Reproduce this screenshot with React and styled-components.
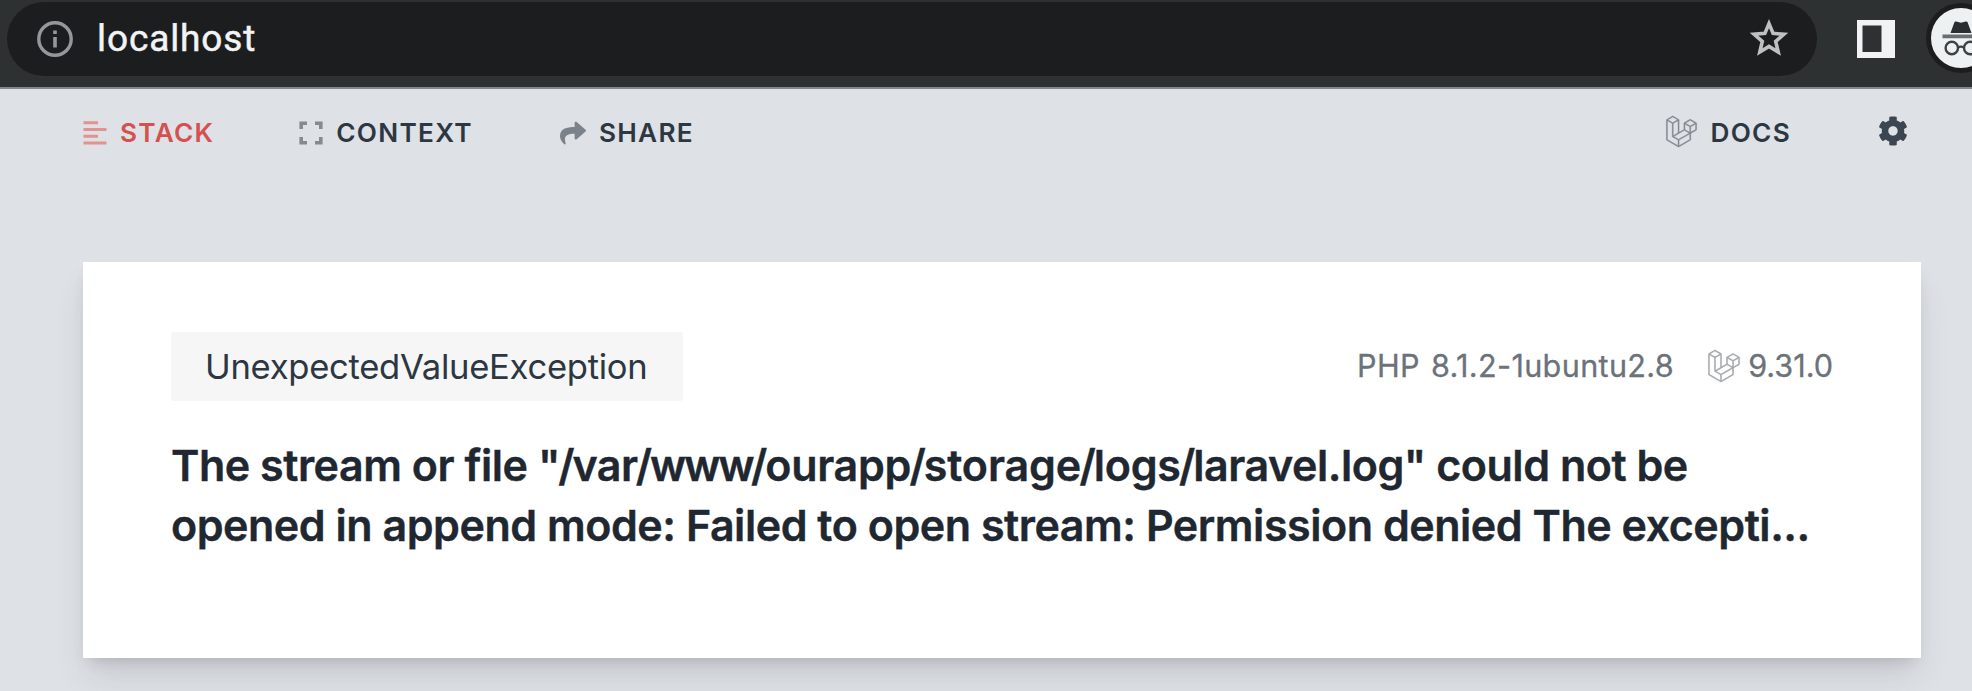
import React from "react";
import styled, { createGlobalStyle } from "styled-components";
import { FaShare, FaCog } from "react-icons/fa";
import { SiLaravel } from "react-icons/si";

const GlobalStyle = createGlobalStyle`
  * { box-sizing: border-box; }
  body { margin: 0; background: #dee1e6; }
`;

const Page = styled.div`
  width: 1972px;
  height: 691px;
  overflow: hidden;
  background: #dee1e6;
  font-family: Inter, "Liberation Sans", sans-serif;
  color: #2d3742;
`;

const BrowserBar = styled.header`
  display: flex;
  align-items: flex-start;
  height: 89px;
  padding: 2px 0 0 7px;
  overflow: hidden;
  background: #2d3132;
  border-bottom: 2px solid #85888b;
`;

const AddressBar = styled.div`
  flex: none;
  display: flex;
  align-items: center;
  width: 1810px;
  height: 74px;
  padding: 0 28px 0 30px;
  border-radius: 37px;
  background: #1c1d1f;
`;

const Url = styled.span`
  margin-left: 24px;
  flex: 1;
  font-family: Roboto, sans-serif;
  font-size: 37px;
  line-height: 44px;
  letter-spacing: 0.9px;
  -webkit-text-stroke: 0.5px #f2f3f4;
  color: #f2f3f4;
`;

const SidePanelIcon = styled.svg`
  flex: none;
  margin: 18px 0 0 40px;
`;

const Profile = styled.div`
  flex: none;
  display: flex;
  align-items: center;
  justify-content: center;
  width: 70px;
  height: 70px;
  margin: 1px 0 0 31px;
  border: 5px solid #1c1d1f;
  border-radius: 50%;
  background: #eef1f2;
`;

const Nav = styled.nav`
  display: flex;
  align-items: center;
  height: 88px;
  padding: 0 64px 0 83px;
`;

const NavItem = styled.a`
  display: flex;
  align-items: center;
  margin-right: ${(p) => p.$gap || 0}px;
  font-size: 26.2px;
  font-weight: 600;
  line-height: 32px;
  letter-spacing: 1.3px;
  color: ${(p) => (p.$active ? "#d4514f" : "#2d3742")};
  svg { flex: none; margin-right: ${(p) => p.$iconGap}px; }
`;

const Spacer = styled.div`
  flex: 1;
`;

const GearIcon = styled(FaCog)`
  flex: none;
  margin-bottom: 4px;
`;

const LaravelIcon = styled(SiLaravel)`
  flex: none;
  stroke: currentColor;
  stroke-width: 0.35px;
  overflow: visible;
`;

const DocsIcon = styled(LaravelIcon)`
  margin-bottom: 4px;
`;

const Card = styled.main`
  width: 1838px;
  height: 396px;
  margin: 85px 0 0 83px;
  padding: 70px 88px 0;
  background: #fff;
  box-shadow: 0 22px 33px -6px rgba(60, 64, 70, 0.14), 0 8px 14px -6px rgba(60, 64, 70, 0.2);
`;

const CardHeader = styled.div`
  display: flex;
  align-items: center;
  justify-content: space-between;
  height: 69px;
`;

const ExceptionBadge = styled.div`
  display: flex;
  align-items: center;
  width: 512px;
  height: 69px;
  padding: 0 0 1px 34px;
  border-radius: 3px;
  background: #f6f6f6;
  font-size: 34.6px;
  letter-spacing: -0.28px;
  color: #2d3742;
`;

const Versions = styled.div`
  display: flex;
  align-items: center;
  padding-bottom: 1px;
  font-size: 30.6px;
  line-height: 40px;
  letter-spacing: 0.35px;
  word-spacing: 2px;
  color: #6b727a;
  -webkit-text-stroke: 0.3px #6b727a;
  svg { margin: 0 8px 0 34px; }
`;

const FrameworkVersion = styled.span`
  letter-spacing: 0;
`;

const Message = styled.h1`
  margin: 34px 0 0;
  font-size: 43px;
  font-weight: 600;
  line-height: 60.2px;
  letter-spacing: -0.47px;
  white-space: nowrap;
  color: #1f2730;
  -webkit-text-stroke: 0.4px #1f2730;
`;

const Line = styled.span`
  display: block;
`;

const Slash = styled.span`
  margin: 0 -1.6px;
`;

const Segment = styled.span`
  letter-spacing: ${(p) => p.$spacing}px;
`;

const InfoIcon = () => (
  <svg width="36" height="36" viewBox="0 0 36 36">
    <circle cx="18" cy="18" r="16.2" fill="none" stroke="#94989c" strokeWidth="3.4" />
    <path d="M16.2 9.5h3.6v3.4h-3.6zM16.2 16h3.6v10.5h-3.6z" fill="#94989c" />
  </svg>
);

const StarIcon = () => (
  <svg width="40" height="40" viewBox="0 0 40 40">
    <path
      d="M20 4.6 L24.1 14.4 L34.9 15.3 L26.7 22.4 L29.2 33 L20 27.4 L10.8 33 L13.3 22.4 L5.1 15.3 L15.9 14.4 Z"
      fill="none"
      stroke="#bfc0c2"
      strokeWidth="3.6"
    />
  </svg>
);

const IncognitoIcon = () => (
  <svg width="40" height="40" viewBox="0 0 40 40">
    <path d="M9.5 15 L13.3 4.4 Q13.8 3.2 15.2 3.5 L20 4.8 L24.8 3.5 Q26.2 3.2 26.7 4.4 L30.5 15Z" fill="#2b2e30" />
    <path d="M1.5 18.4H38.5" stroke="#6a6e70" strokeWidth="3.6" />
    <g fill="none" stroke="#3d4143" strokeWidth="2.4">
      <circle cx="10.8" cy="30" r="6.2" />
      <circle cx="29.2" cy="30" r="6.2" />
      <path d="M17 29.4q3-1.6 6 0" />
    </g>
  </svg>
);

const StackIcon = () => (
  <svg width="24" height="24" viewBox="0 0 24 24">
    <path d="M.5 1.8H15M.5 8.5H23.5M.5 15.2H15M.5 21.9H23.5" stroke="#e2928f" strokeWidth="3" />
  </svg>
);

const ContextIcon = () => (
  <svg width="24" height="24" viewBox="0 0 24 24">
    <path
      d="M2.2 8V2.2H8M16 2.2H21.8V8M21.8 16V21.8H16M8 21.8H2.2V16"
      fill="none"
      stroke="#868a8f"
      strokeWidth="3.6"
    />
  </svg>
);

const path = [
  { name: "var", spacing: -0.6 },
  { name: "www", spacing: -1.9 },
  { name: "ourapp", spacing: -0.3 },
  { name: "storage", spacing: -0.1 },
  { name: "logs", spacing: -0.3 },
  { name: "laravel.log", spacing: -0.47 },
];

export default function App() {
  return (
    <Page>
      <GlobalStyle />
      <BrowserBar>
        <AddressBar>
          <InfoIcon />
          <Url>localhost</Url>
          <StarIcon />
        </AddressBar>
        <SidePanelIcon width="38" height="38" viewBox="0 0 38 38">
          <path fillRule="evenodd" fill="#f0f2f3" d="M0 0H38V38H0ZM5.5 5.5V32H24.5V5.5Z" />
        </SidePanelIcon>
        <Profile>
          <IncognitoIcon />
        </Profile>
      </BrowserBar>
      <Nav>
        <NavItem $active $iconGap={13} $gap={85}>
          <StackIcon />
          STACK
        </NavItem>
        <NavItem $iconGap={13} $gap={87}>
          <ContextIcon />
          CONTEXT
        </NavItem>
        <NavItem $iconGap={13}>
          <FaShare size={26} color="#7c828a" />
          SHARE
        </NavItem>
        <Spacer />
        <NavItem $iconGap={13} $gap={87}>
          <DocsIcon size={31} color="#80868d" />
          DOCS
        </NavItem>
        <GearIcon size={30} color="#3c4652" />
      </Nav>
      <Card>
        <CardHeader>
          <ExceptionBadge>UnexpectedValueException</ExceptionBadge>
          <Versions>
            <span>PHP 8.1.2-1ubuntu2.8</span>
            <LaravelIcon size={32} color="#a0a4a8" />
            <FrameworkVersion>9.31.0</FrameworkVersion>
          </Versions>
        </CardHeader>
        <Message>
          <Line>
            The stream or file "
            {path.map((part) => (
              <React.Fragment key={part.name}>
                <Slash>/</Slash>
                <Segment $spacing={part.spacing}>{part.name}</Segment>
              </React.Fragment>
            ))}
            " could not be
          </Line>
          <Line>opened in append mode: Failed to open stream: Permission denied The excepti...</Line>
        </Message>
      </Card>
    </Page>
  );
}
